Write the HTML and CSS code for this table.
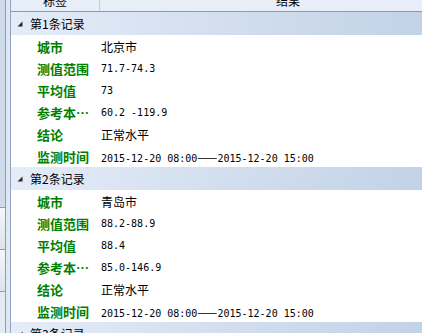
FILE: index.html
```html
<!DOCTYPE html>
<html lang="zh-CN">
<head>
<meta charset="utf-8">
<link rel="stylesheet" href="styles.css">
</head>
<body>
<div class="app">
  <div class="side">
    <div class="side-a">
      <div class="panel"></div>
      <div class="btn"></div>
      <div class="btn"></div>
      <div class="rest"></div>
    </div>
    <div class="side-b"></div>
  </div>
  <div class="main">
    <div class="head">
      <div class="hc c1"><span>标签</span></div>
      <div class="hc c2"><span>结果</span></div>
    </div>

    <div class="group">
      <div class="ghead"><svg class="tri" width="6" height="6" viewBox="0 0 6 6"><polygon points="5.5,0.5 5.5,5.5 0.5,5.5" fill="#262626"/></svg>第1条记录</div>
      <div class="row"><div class="lab">城市</div><div class="val cn">北京市</div></div>
      <div class="row"><div class="lab">测值范围</div><div class="val num">71.7-74.3</div></div>
      <div class="row"><div class="lab">平均值</div><div class="val num">73</div></div>
      <div class="row"><div class="lab">参考本底值</div><div class="val num">60.2 -119.9</div></div>
      <div class="row"><div class="lab">结论</div><div class="val cn">正常水平</div></div>
      <div class="row"><div class="lab">监测时间</div><div class="val num">2015-12-20 08:00<span class="dash">——</span>2015-12-20 15:00</div></div>
    </div>

    <div class="group">
      <div class="ghead"><svg class="tri" width="6" height="6" viewBox="0 0 6 6"><polygon points="5.5,0.5 5.5,5.5 0.5,5.5" fill="#262626"/></svg>第2条记录</div>
      <div class="row"><div class="lab">城市</div><div class="val cn">青岛市</div></div>
      <div class="row"><div class="lab">测值范围</div><div class="val num">88.2-88.9</div></div>
      <div class="row"><div class="lab">平均值</div><div class="val num">88.4</div></div>
      <div class="row"><div class="lab">参考本底值</div><div class="val num">85.0-146.9</div></div>
      <div class="row"><div class="lab">结论</div><div class="val cn">正常水平</div></div>
      <div class="row"><div class="lab">监测时间</div><div class="val num">2015-12-20 08:00<span class="dash">——</span>2015-12-20 15:00</div></div>
    </div>

    <div class="group">
      <div class="ghead"><svg class="tri" width="6" height="6" viewBox="0 0 6 6"><polygon points="5.5,0.5 5.5,5.5 0.5,5.5" fill="#262626"/></svg>第3条记录</div>
    </div>
  </div>
</div>
</body>
</html>
```

FILE: styles.css
```css
html, body {
  margin: 0;
  padding: 0;
  background: #ffffff;
}
body {
  width: 422px;
  height: 333px;
  overflow: hidden;
  font-family: "Noto Sans CJK SC", "Noto Sans", sans-serif;
  font-size: 12px;
  color: #000;
}
.app {
  display: flex;
  height: 333px;
  overflow: hidden;
}
.side {
  display: flex;
  width: 11px;
  flex: none;
  height: 333px;
}
.side-a {
  width: 5px;
  border-right: 1px solid #8d9fb8;
  display: flex;
  flex-direction: column;
  background: #dfe7f2;
}
.panel {
  height: 207px;
  background: #cfdaea;
}
.btn {
  height: 41px;
  border-top: 1px solid #8d9fb8;
  background: linear-gradient(#f4f7fb, #dce3ed);
}
.rest {
  flex: 1;
  border-top: 1px solid #8d9fb8;
  background: #e4ebf4;
}
.side-b {
  width: 4px;
  background: #dfe7f2;
  border-right: 1px solid #8fa3bf;
}
.main {
  flex: 1;
  overflow: hidden;
  display: flex;
  flex-direction: column;
}
.head {
  height: 11px;
  flex: none;
  border-bottom: 1px solid #8a9ab4;
  background: #e7eef8;
  display: flex;
  overflow: hidden;
}
.hc span {
  display: block;
  line-height: 12px;
  margin-top: -5px;
  font-size: 12px;
  white-space: nowrap;
}
.c1 {
  width: 88px;
  border-right: 1px solid #c2cddc;
  text-align: center;
}
.c2 {
  flex: 1;
  padding-left: 176px;
}
.group {
  flex: none;
}
.ghead {
  height: 23px;
  display: flex;
  align-items: center;
  background: linear-gradient(100deg, #e4ecf8 0%, #d3dfef 50%, #c2d2e7 100%);
  font-size: 12px;
  white-space: nowrap;
}
.tri {
  margin-left: 6px;
  margin-right: 7px;
  flex: none;
}
.row {
  height: 22px;
  display: flex;
  align-items: center;
}
.lab {
  width: 63px;
  padding-left: 26px;
  flex: none;
  font-size: 13px;
  font-weight: bold;
  color: #008000;
  white-space: nowrap;
  overflow: hidden;
  text-overflow: ellipsis;
}
.val {
  padding-left: 1px;
  white-space: nowrap;
}
.cn {
  font-size: 12px;
}
.num {
  font-family: "DejaVu Sans Mono", "Liberation Mono", monospace;
  font-size: 10px;
}
.dash {
  font-family: "Noto Sans CJK SC", sans-serif;
  font-size: 12px;
}
```
